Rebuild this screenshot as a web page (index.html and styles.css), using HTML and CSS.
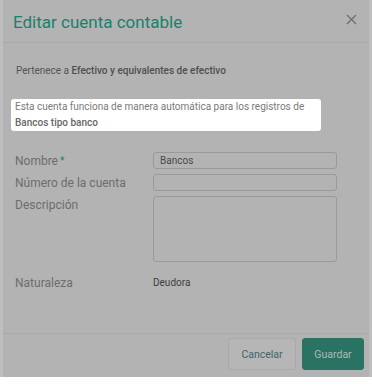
FILE: index.html
```html
<!DOCTYPE html>
<html lang="es">
<head>
<meta charset="utf-8">
<title>Editar cuenta contable</title>
<link rel="stylesheet" href="styles.css">
</head>
<body>
<div class="backdrop">
  <div class="modal">
    <header class="modal-header">
      <h1 class="modal-title">Editar cuenta contable</h1>
      <span class="close" aria-label="Cerrar">
        <svg width="11" height="11" viewBox="0 0 11 11"><path d="M1 1L10 10M10 1L1 10" stroke="#6e6e6e" stroke-width="1.3" fill="none"/></svg>
      </span>
    </header>
    <div class="modal-body">
      <p class="parent">Pertenece a <strong>Efectivo y equivalentes de efectivo</strong></p>
      <div class="notice">Esta cuenta funciona de manera automática para los registros de <strong>Bancos tipo banco</strong></div>
      <div class="form">
        <label class="label">Nombre<span class="req">*</span></label>
        <div class="input">Bancos</div>
        <label class="label">Número de la cuenta</label>
        <div class="input"></div>
        <label class="label">Descripción</label>
        <div class="input textarea"></div>
        <label class="label nat">Naturaleza</label>
        <div class="value">Deudora</div>
      </div>
    </div>
    <footer class="modal-footer">
      <button class="btn btn-cancel">Cancelar</button>
      <button class="btn btn-save">Guardar</button>
    </footer>
  </div>
</div>
</body>
</html>
```
FILE: styles.css
```css
html, body {
  margin: 0;
  padding: 0;
  background: #ffffff;
  font-family: Roboto, "Liberation Sans", Arial, sans-serif;
}
.backdrop {
  background: #bebebe;
  height: 377px;
  padding: 0 3px;
  box-shadow: 0 2px 3px rgba(0,0,0,0.25);
}
.modal {
  background: #b3b3b3;
  height: 377px;
  display: flex;
  flex-direction: column;
}
.modal-header {
  height: 43px;
  flex: none;
  box-sizing: border-box;
  border-bottom: 1px solid #aaaaaa;
  display: flex;
  align-items: center;
  justify-content: space-between;
  padding: 0 12px 0 10px;
}
.modal-title {
  margin: 0;
  font-size: 17px;
  font-weight: 400;
  color: #17826c;
  padding-top: 2px;
}
.close {
  display: flex;
  margin-top: -4px;
}
.modal-body {
  flex: 1;
  padding: 0 10px;
}
.parent {
  margin: 22px 0 0 3px;
  font-size: 10px;
  color: #555555;
  line-height: 12px;
}
.parent strong {
  font-weight: 500;
  color: #4f4f4f;
}
.notice {
  margin: 22px 0 0 -2px;
  background: #ffffff;
  border-radius: 3px;
  padding: 0 4px 0 4px;
  font-size: 10px;
  line-height: 16px;
  color: #7a7a7a;
  width: 310px;
  box-sizing: border-box;
}
.notice strong {
  font-weight: 500;
  color: #666666;
}
.form {
  margin-top: 21px;
  display: grid;
  grid-template-columns: 138px 184px;
  row-gap: 5px;
  padding-left: 2px;
  align-items: start;
}
.label {
  font-size: 12px;
  color: #6d6d6d;
  line-height: 16px;
  padding-top: 1px;
}
.req {
  color: #17826c;
  font-size: 10px;
  margin-left: 2px;
  vertical-align: 1px;
}
.input {
  height: 17px;
  box-sizing: border-box;
  border: 1px solid #9a9a9a;
  border-radius: 3px;
  font-size: 10px;
  color: #4a4a4a;
  padding: 2px 6px 0;
  line-height: 12px;
}
.textarea {
  height: 66px;
}
.nat {
  margin-top: 7px;
}
.value {
  margin-top: 9px;
  font-size: 10px;
  color: #3e3e3e;
  line-height: 14px;
}
.modal-footer {
  height: 44px;
  flex: none;
  box-sizing: border-box;
  border-top: 1px solid #aaaaaa;
  display: flex;
  justify-content: flex-end;
  align-items: flex-start;
  gap: 6px;
  padding: 4px 5px 0 0;
}
.btn {
  height: 32px;
  border-radius: 3px;
  font-family: Roboto, "Liberation Sans", Arial, sans-serif;
  font-size: 10.5px;
  padding: 0;
  cursor: pointer;
}
.btn-cancel {
  width: 68px;
  background: #b6b6b6;
  border: 1px solid #a9a9a9;
  color: #416469;
}
.btn-save {
  width: 62px;
  background: #2a7262;
  border: 1px solid #2a7262;
  color: #a9bdb7;
}
```
